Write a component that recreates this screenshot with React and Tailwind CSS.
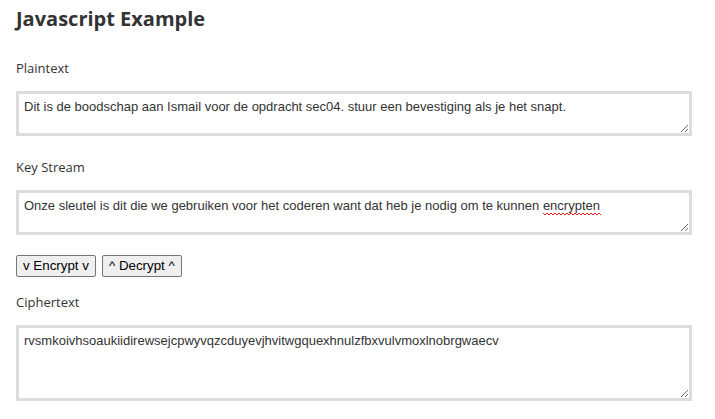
import { useState } from "react"

const boxClass =
  "block w-[676px] border-[3px] border-[#dcdcdc] bg-white px-[5px] py-[5px] text-[13px] leading-[16px] text-[#333] outline-none"

function Field({ label, value, onChange, height, top, children }) {
  return (
    <div>
      <div className={`${top} text-[13px] leading-[18px] text-[#333]`}>{label}</div>
      <div className="relative mt-[14px]">
        <textarea
          value={value}
          onChange={(e) => onChange(e.target.value)}
          spellCheck={false}
          className={boxClass}
          style={{ height, fontFamily: "Arial, 'Liberation Sans', sans-serif" }}
        />
        {children}
      </div>
    </div>
  )
}

export default function App() {
  const [plain, setPlain] = useState(
    "Dit is de boodschap aan Ismail voor de opdracht sec04. stuur een bevestiging als je het snapt."
  )
  const [key, setKey] = useState(
    "Onze sleutel is dit die we gebruiken voor het coderen want dat heb je nodig om te kunnen encrypten"
  )
  const [cipher, setCipher] = useState(
    "rvsmkoivhsoaukiidirewsejcpwyvqzcduyevjhvitwgquexhnulzfbxvulvmoxlnobrgwaecv"
  )

  return (
    <div className="min-h-[419px] bg-white px-4 pt-[5px]" style={{ fontFamily: "'Open Sans', sans-serif" }}>
      <h1 className="text-[20px] font-bold leading-[28px] text-[#333]">Javascript Example</h1>

      <Field label="Plaintext" value={plain} onChange={setPlain} height={45} top="mt-[26px]" />

      <Field label="Key Stream" value={key} onChange={setKey} height={45} top="mt-[22px]">
        {/* spell-check squiggle under "encrypten" */}
        <svg className="pointer-events-none absolute left-[527px] top-[22px]" width="58" height="4" viewBox="0 0 58 4">
          <path
            d="M0 1 L2 3 L4 1 L6 3 L8 1 L10 3 L12 1 L14 3 L16 1 L18 3 L20 1 L22 3 L24 1 L26 3 L28 1 L30 3 L32 1 L34 3 L36 1 L38 3 L40 1 L42 3 L44 1 L46 3 L48 1 L50 3 L52 1 L54 3 L56 1 L58 3"
            fill="none"
            stroke="#e02020"
            strokeWidth="1"
          />
        </svg>
      </Field>

      <div className="mt-[20px] flex gap-[6px]" style={{ fontFamily: "Arial, 'Liberation Sans', sans-serif" }}>
        <button className="h-[22px] rounded-[2px] border border-[#767676] bg-[#efefef] px-[6px] text-[13.33px] text-black">
          v Encrypt v
        </button>
        <button className="h-[22px] rounded-[2px] border border-[#767676] bg-[#efefef] px-[6px] text-[13.33px] text-black">
          ^ Decrypt ^
        </button>
      </div>

      <Field label="Ciphertext" value={cipher} onChange={setCipher} height={76} top="mt-[16px]" />
    </div>
  )
}
